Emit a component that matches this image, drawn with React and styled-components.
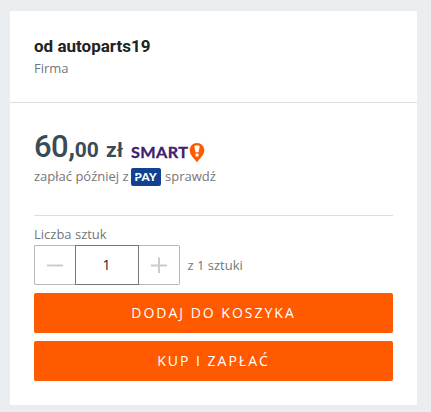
import React, { useState } from 'react';
import styled, { createGlobalStyle } from "styled-components";


const GlobalStyle = createGlobalStyle`
  * {
    box-sizing: border-box;
  }
  body {
    margin: 0;
    background: #ebeef1;
    font-family: "Open Sans", sans-serif;
    font-size: 13px;
    color: #767676;
  }
`;

const Page = styled.div`
  height: 412px;
  padding: 11px 14px 7px 10px;
  overflow: hidden;
`;

const OfferCard = styled.div`
  height: 394px;
  background: #fff;
`;

const SellerSection = styled.div`
  height: 92px;
  padding: 24px 24px 0;
  border-bottom: 1px solid #ddd;
`;

const SellerName = styled.div`
  height: 23px;
  font-family: Roboto, sans-serif;
  font-size: 17px;
  font-weight: 700;
  line-height: 22px;
  color: #222;
`;

const SellerType = styled.div`
  line-height: 21px;
`;

const OfferSection = styled.div`
  padding: 25px 24px 0;
`;

const PriceRow = styled.div`
  display: flex;
  align-items: flex-start;
  height: 39px;
`;

const Price = styled.div`
  width: 97px;
  font-family: Roboto, sans-serif;
  font-size: 21px;
  font-weight: 700;
  line-height: 38px;
  word-spacing: 2px;
  white-space: nowrap;
  color: #3a4b56;
`;

const PriceWhole = styled.span`
  font-size: 31px;
  font-weight: 500;
  letter-spacing: -0.5px;
`;

const SmartLogo = styled.svg`
  display: block;
  margin-top: 14px;
`;

const PayRow = styled.div`
  display: flex;
  align-items: center;
  height: 20px;
  line-height: 20px;
  white-space: nowrap;
`;

const PayLabel = styled.span`
  width: 97px;
  margin-top: -3px;
`;

const PayLink = styled.span`
  margin: -3px 0 0 4px;
`;

const PayLogo = styled.svg`
  display: block;
`;

const Divider = styled.div`
  height: 1px;
  margin: 28px 0 9px;
  background: #ddd;
`;

const QuantityLabel = styled.label`
  display: block;
  height: 20px;
  line-height: 19px;
`;

const QuantityRow = styled.div`
  display: flex;
  align-items: center;
  height: 40px;
  margin-bottom: 8px;
`;

const StepButton = styled.button`
  display: flex;
  align-items: center;
  justify-content: center;
  width: 41px;
  height: 40px;
  padding: 0;
  border: 1px solid #b8b8b8;
  border-left-width: ${props => (props.$right ? 0 : '1px')};
  border-right-width: ${props => (props.$right ? '1px' : 0)};
  border-radius: ${props => (props.$right ? '0 2px 2px 0' : '2px 0 0 2px')};
  background: #fff;
`;

const QuantityInput = styled.input`
  width: 64px;
  height: 40px;
  padding: 0 1px 1px 0;
  border: 1px solid #767676;
  border-radius: 0;
  outline: none;
  font-family: "Open Sans", sans-serif;
  font-size: 14px;
  text-align: center;
  color: #222;
`;

const QuantityInfo = styled.span`
  margin-left: 7.5px;
`;

const ActionButton = styled.button`
  display: block;
  width: 100%;
  height: 40px;
  margin-bottom: 8px;
  padding: 0 0 1px;
  border: 0;
  border-radius: 2px;
  background: #ff5a00;
  font-family: "Open Sans", sans-serif;
  font-size: 14px;
  letter-spacing: 2px;
  color: #fff;
`;

const Smart = () => (
  <SmartLogo width="75" height="22" viewBox="0 0 75 22">
    <text
      x="0"
      y="15.6"
      textLength="57.5"
      lengthAdjust="spacingAndGlyphs"
      letterSpacing="0.4"
      fontFamily="Lato, sans-serif"
      fontSize="15"
      fontWeight="700"
      stroke="#41206f"
      strokeWidth="0.3"
      fill="#41206f"
    >
      SMART
    </text>
    <path
      d="M66 1C61.900 1 58.700 4.200 58.700 8.200C58.700 13.100 63.400 16.600 66 20.200C68.600 16.600 73.300 13.100 73.300 8.200C73.300 4.200 70.100 1 66 1Z"
      fill="#ff5a00"
    />
    <path d="M63.300 4Q66 2.600 68.700 4L67.600 10.200H64.400Z" fill="#fff" />
    <circle cx="66" cy="13" r="1.700" fill="#fff" />
  </SmartLogo>
);

const Pay = () => (
  <PayLogo width="30" height="18" viewBox="0 0 30 18">
    <rect width="30" height="18" rx="2" fill="#124191" />
    <text
      x="3.500"
      y="13"
      textLength="22.5"
      lengthAdjust="spacingAndGlyphs"
      letterSpacing="0.3"
      fontFamily="Lato, sans-serif"
      fontSize="11.3"
      fontWeight="900"
      fill="#fff"
    >
      PAY
    </text>
    <path d="M2.500 8.500H7" stroke="#124191" strokeWidth="1" />
  </PayLogo>
);

function App() {
  const [quantity, setQuantity] = useState('1');

  return (
    <Page>
      <GlobalStyle />
      <OfferCard>
        <SellerSection>
          <SellerName>od autoparts19</SellerName>
          <SellerType>Firma</SellerType>
        </SellerSection>
        <OfferSection>
          <PriceRow>
            <Price>
              <PriceWhole>60,</PriceWhole>00 zł
            </Price>
            <Smart />
          </PriceRow>
          <PayRow>
            <PayLabel>zapłać później z</PayLabel>
            <Pay />
            <PayLink>sprawdź</PayLink>
          </PayRow>
          <Divider />
          <QuantityLabel htmlFor="quantity">Liczba sztuk</QuantityLabel>
          <QuantityRow>
            <StepButton aria-label="mniej">
              <svg width="16" height="16" viewBox="0 0 16 16">
                <path d="M0 8.500H16" stroke="#ccc" strokeWidth="2" />
              </svg>
            </StepButton>
            <QuantityInput
              id="quantity"
              value={quantity}
              onChange={e => setQuantity(e.target.value)}
            />
            <StepButton $right aria-label="więcej">
              <svg width="16" height="16" viewBox="0 0 16 16">
                <path d="M0 8.500H16M8 0.500V16" stroke="#ccc" strokeWidth="2" />
              </svg>
            </StepButton>
            <QuantityInfo>z 1 sztuki</QuantityInfo>
          </QuantityRow>
          <ActionButton>DODAJ DO KOSZYKA</ActionButton>
          <ActionButton>KUP I ZAPŁAĆ</ActionButton>
        </OfferSection>
      </OfferCard>
    </Page>
  );
}
export default App;
